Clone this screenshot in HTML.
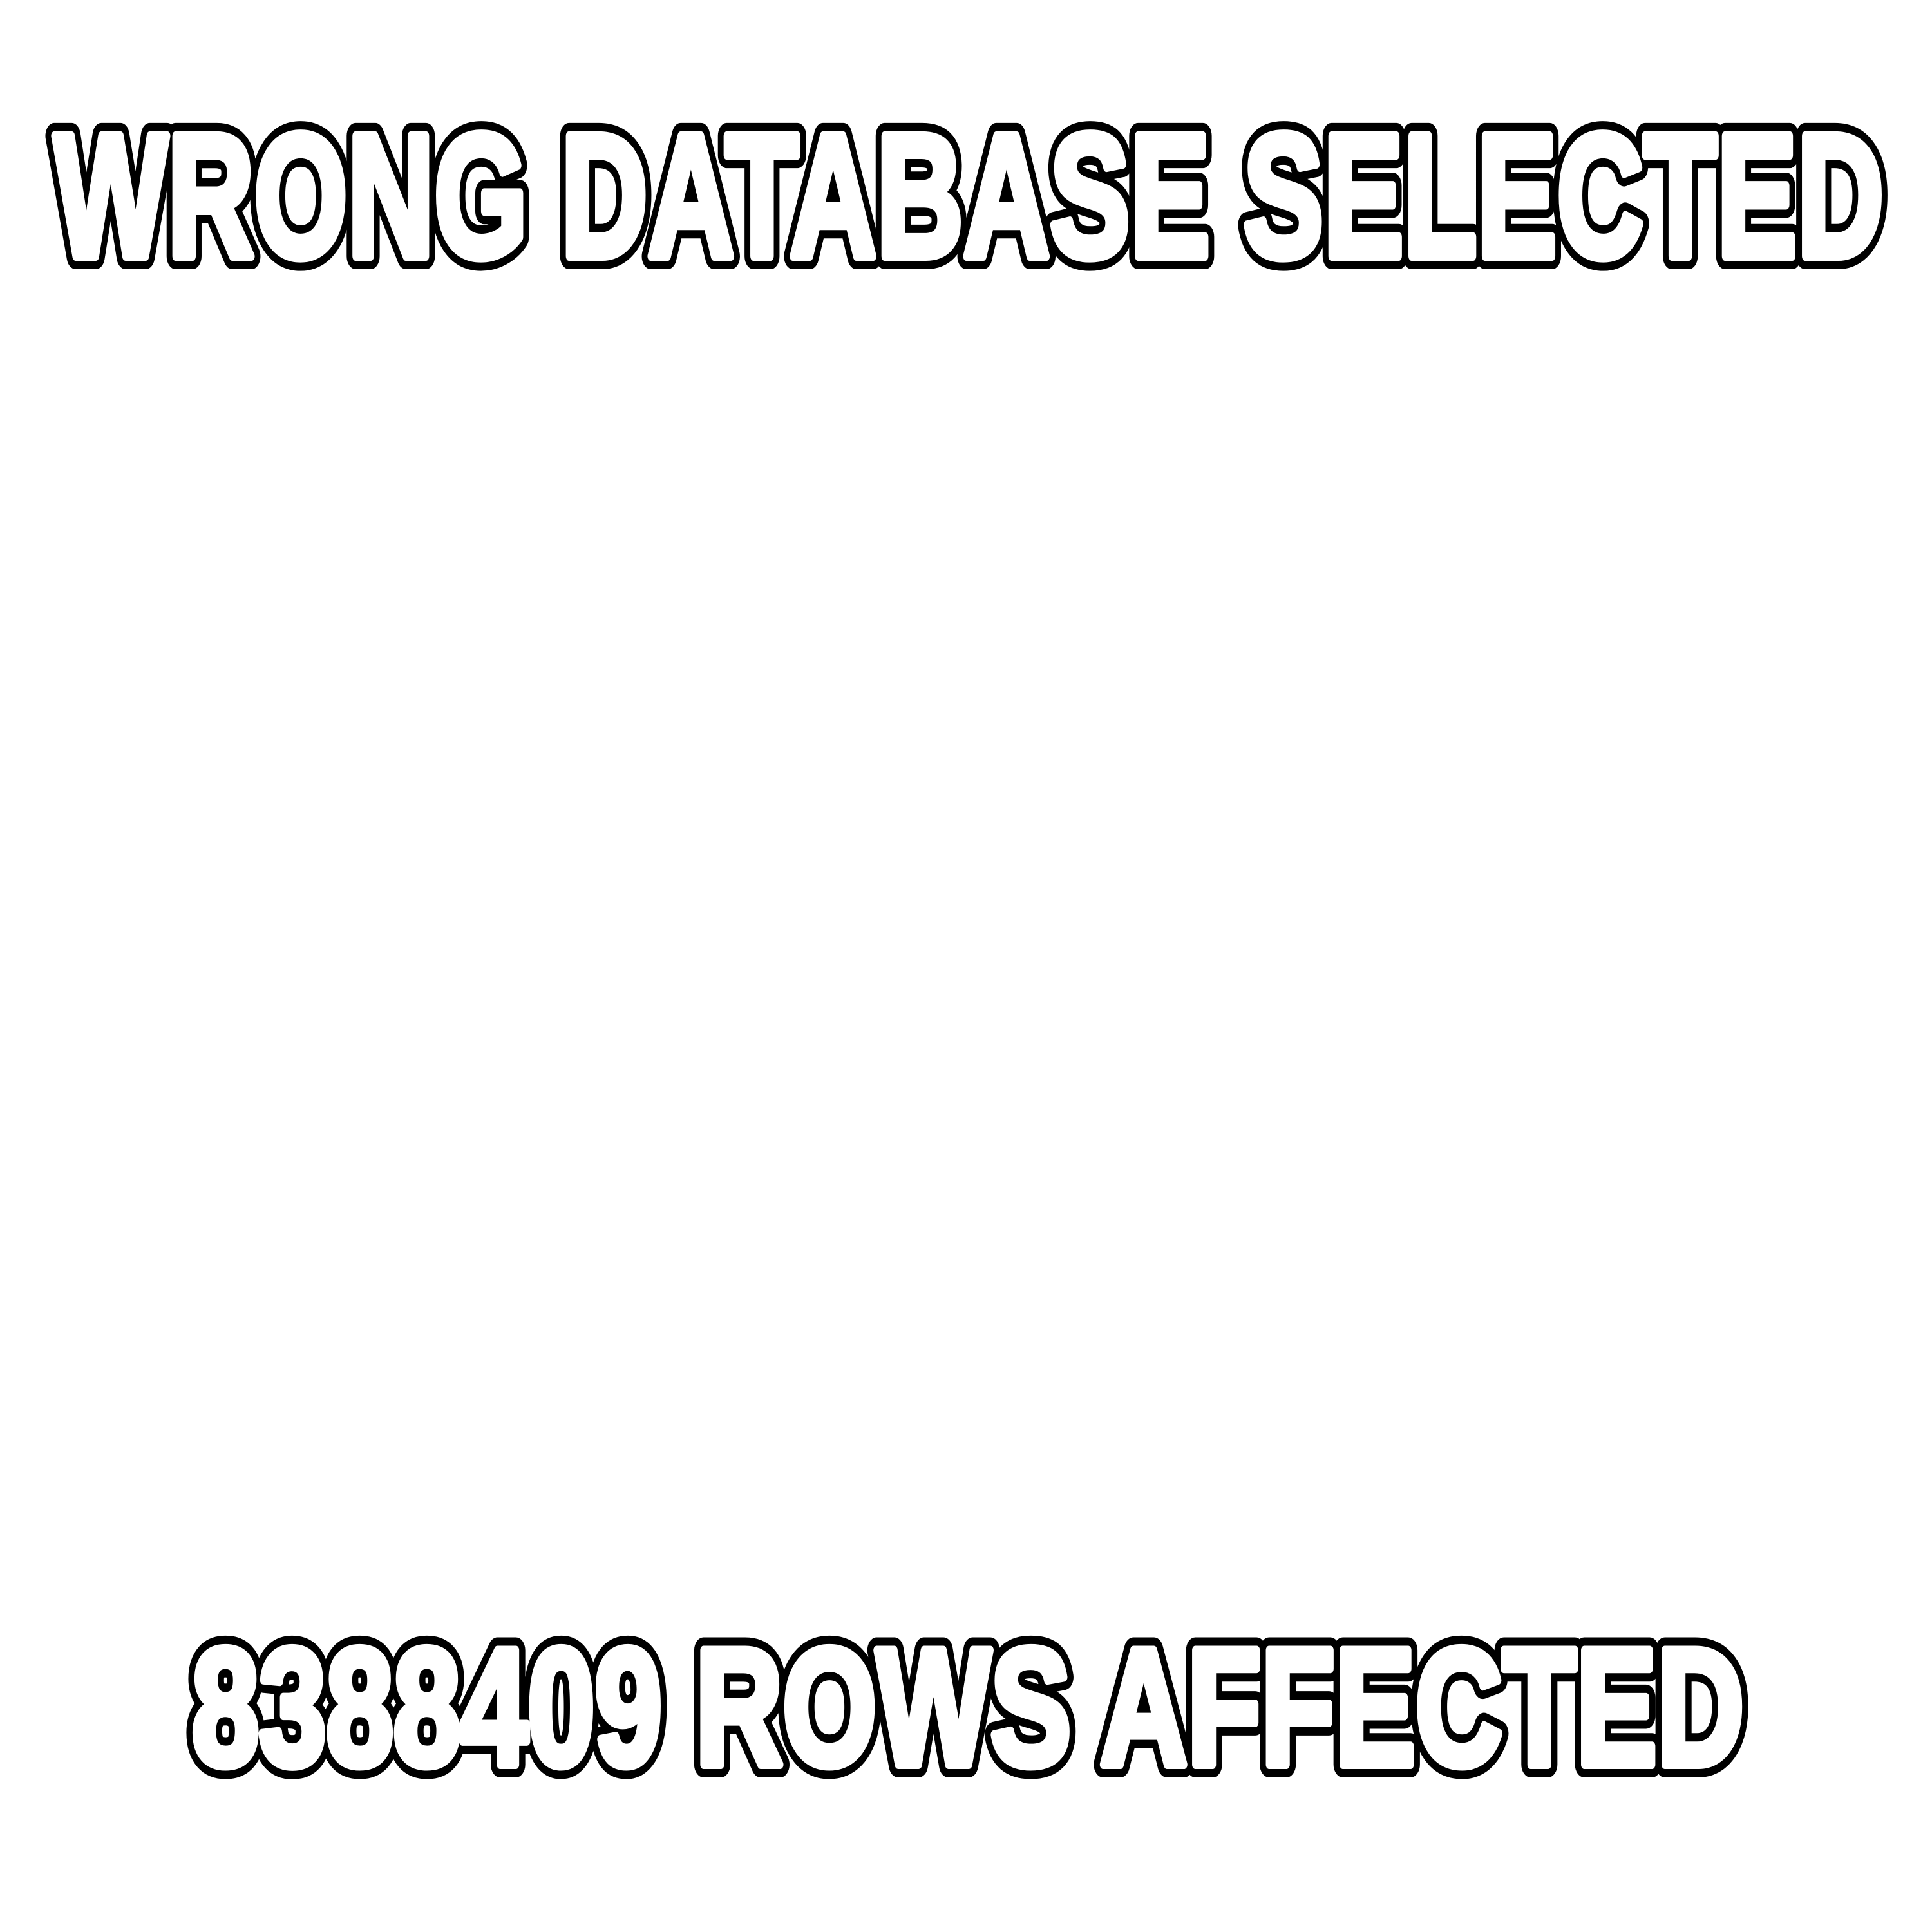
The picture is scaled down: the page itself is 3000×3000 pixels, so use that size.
<!DOCTYPE html>
<html><head><meta charset="utf-8"><style>
html,body{margin:0;padding:0;background:#fff;width:3000px;height:3000px;overflow:hidden}
svg{display:block}
text{font-family:"Liberation Sans",sans-serif;font-weight:bold;stroke-linejoin:round}
.o{fill:#000;stroke:#000;stroke-width:40}
.i{fill:#fff;stroke:#fff;stroke-width:14}
</style></head><body>
<svg width="3000" height="3000" viewBox="0 0 3000 3000">
<text class="o" x="84" y="398" font-size="272" textLength="2841" lengthAdjust="spacingAndGlyphs">WRONG DATABASE SELECTED</text>
<text class="i" x="84" y="398" font-size="272" textLength="2841" lengthAdjust="spacingAndGlyphs">WRONG DATABASE SELECTED</text>
<text class="o" x="298" y="2740" font-size="258" textLength="2410" lengthAdjust="spacingAndGlyphs">8388409 ROWS AFFECTED</text>
<text class="i" x="298" y="2740" font-size="258" textLength="2410" lengthAdjust="spacingAndGlyphs">8388409 ROWS AFFECTED</text>
</svg>
</body></html>
